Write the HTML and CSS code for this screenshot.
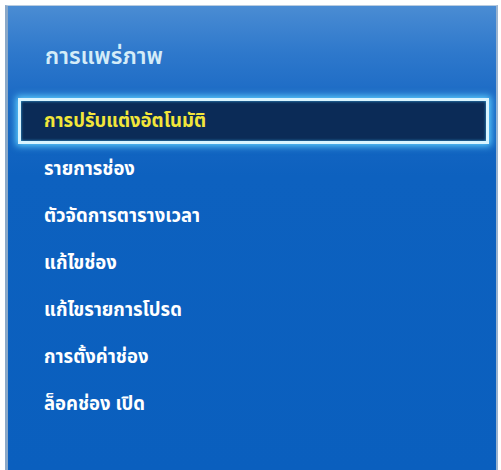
FILE: index.html
```html
<!DOCTYPE html>
<html lang="th">
<head>
<meta charset="utf-8">
<link rel="stylesheet" href="styles.css">
</head>
<body>
<div class="panel">
  <div class="title">การแพร่ภาพ</div>
  <ul class="menu">
    <li class="item selected">การปรับแต่งอัตโนมัติ</li>
    <li class="item">รายการช่อง</li>
    <li class="item">ตัวจัดการตารางเวลา</li>
    <li class="item">แก้ไขช่อง</li>
    <li class="item">แก้ไขรายการโปรด</li>
    <li class="item">การตั้งค่าช่อง</li>
    <li class="item">ล็อคช่อง เปิด</li>
  </ul>
</div>
</body>
</html>
```
FILE: styles.css
```css
html, body {
  margin: 0;
  padding: 0;
  background: #ffffff;
  width: 501px;
  height: 470px;
  overflow: hidden;
}
body {
  padding: 5px 3px 0 5px;
  box-sizing: border-box;
  font-family: Tahoma, "Noto Sans Thai", "DejaVu Sans", sans-serif;
}
.panel {
  height: 465px;
  box-sizing: border-box;
  border-left: 3px solid #8aa8c8;
  border-top: 1px solid #b8cce0;
  border-right: 2px solid #9ab4d0;
  background: linear-gradient(to bottom, #4a8cd3 0px, #2f79cc 45px, #1a69c4 95px, #0d61bf 170px, #0a5fbe 465px);
  padding: 34px 7px 0 10px;
}
.title {
  color: #d4ecf8;
  font-size: 23px;
  font-weight: 600;
  padding-left: 27px;
  height: 58px;
  line-height: 34px;
}
.menu {
  list-style: none;
  margin: 0;
  padding: 0;
}
.item {
  color: #ffffff;
  font-size: 18.5px;
  font-weight: bold;
  height: 47px;
  line-height: 47px;
  padding-left: 26px;
}
.item.selected {
  color: #f2e63a;
  background: #0b2b57;
  border: 3px solid #d8f4ff;
  box-shadow: 0 0 7px 2px #5fd0ff, inset 0 0 3px #3aa8e0;
  height: 40px;
  line-height: 40px;
  padding-left: 23px;
  margin-bottom: 2px;
}
```
